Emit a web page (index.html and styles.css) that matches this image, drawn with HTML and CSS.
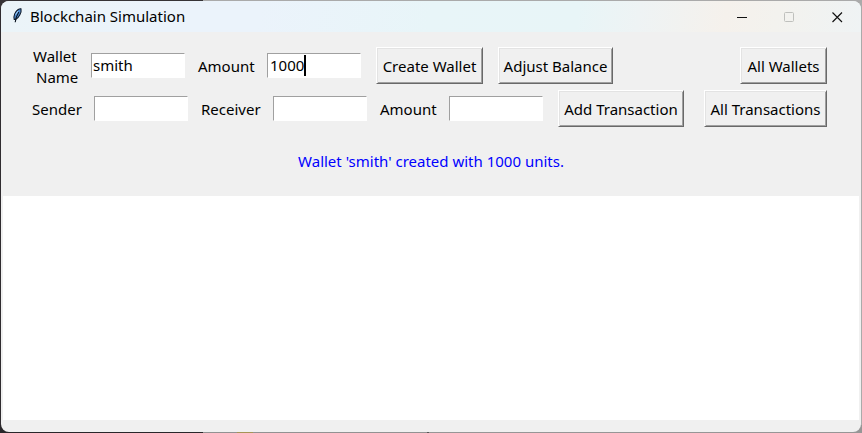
FILE: index.html
```html
<!DOCTYPE html>
<html lang="en">
<head>
<meta charset="utf-8">
<title>Blockchain Simulation</title>
<link rel="stylesheet" href="styles.css">
</head>
<body>
<main class="window">
  <header class="titlebar">
    <svg class="feather" width="12" height="18" viewBox="0 0 12 18">
      <path d="M3.2 12.4C2.2 9 4.2 4.4 7.2 2.5Q9 1.4 10 1.8C10.8 5 8 10.8 4.6 12.4Z" fill="#4c8ad0" stroke="#101b2b" stroke-width="1.1"/>
      <path d="M4.2 15.3Q4.4 10.5 7.8 5" fill="none" stroke="#07111d" stroke-width="1.1"/>
      <path d="M7 4L4.6 7.6" stroke="#a8d3fb" stroke-width="1"/>
    </svg>
    <h1 class="title">Blockchain Simulation</h1>
    <svg class="controls" width="108" height="12" viewBox="0 0 108 12">
      <path d="M0 6.5H10" stroke="#111" fill="none"/>
      <rect x="47.5" y="1.5" width="9" height="9" rx="1" stroke="#bfc0bd" fill="none"/>
      <path d="M95.5 1.5L105 11M105 1.5L95.5 11" stroke="#111" stroke-width="1.15" fill="none"/>
    </svg>
  </header>
  <section class="form">
    <div class="row wallet-row">
      <div class="label stacked"><span>Wallet</span><span class="name">Name</span></div>
      <div class="entry"><span>smith</span></div>
      <div class="label amount">Amount</div>
      <div class="entry"><span class="thousand">1000</span><i class="caret"></i></div>
      <button class="button create">Create Wallet</button>
      <button class="button adjust">Adjust Balance</button>
      <button class="button wallets">All Wallets</button>
    </div>
    <div class="row transaction-row">
      <div class="label">Sender</div>
      <div class="entry"></div>
      <div class="label receiver">Receiver</div>
      <div class="entry"></div>
      <div class="label amount">Amount</div>
      <div class="entry"></div>
      <button class="button add">Add Transaction</button>
      <button class="button transactions">All Transactions</button>
    </div>
    <p class="status">Wallet 'smith' created with 1000 units.</p>
  </section>
  <section class="output"></section>
</main>
</body>
</html>
```
FILE: styles.css
```css
* { box-sizing: border-box; }
html { height: 100%; }
body {
  margin: 0;
  height: 433px;
  padding: 1px;
  overflow: hidden;
  background:
    linear-gradient(90deg, #29272a 203px, #929292 203px 237px, #a59456 237px 253px, #929292 253px 427px, #555 427px 429px, #969696 429px) bottom / 100% 8px no-repeat,
    linear-gradient(90deg, #363336 203px, #aaa 203px) top / 100% 8px no-repeat,
    linear-gradient(90deg, #302c30 50%, #aaa 50%);
  font: 15px/21px "Noto Sans", "Open Sans", sans-serif;
  color: #000;
}
.window {
  height: 431px;
  overflow: hidden;
  border-radius: 8px;
  background: #f0f0f0;
}
.titlebar {
  display: flex;
  align-items: center;
  height: 31px;
  padding: 0 16px 0 10px;
  background: linear-gradient(100deg, #ebf4f8 0%, #ebf3fb 18%, #ebf3fb 30%, #e8f5f8 50%, #e8f5f7 67%, #eef3f4 74%, #f5f1ec 84%, #f3f2ee 90%, #eff3f4 100%);
}
.feather { flex: none; margin-top: -1px; }
.title { margin: 0 0 0 7px; font-size: 15px; font-weight: 400; white-space: nowrap; }
.controls { margin-left: auto; }
.form { height: 164px; padding: 15px 0 0 30px; }
.row { display: grid; grid-template-rows: 37px; height: 37px; align-items: center; white-space: nowrap; }
.wallet-row { grid-template-columns: 60px 107px 69px 109px 122px 242px 87px; }
.transaction-row { grid-template-columns: 63px 107px 72px 107px 69px 109px 146px 123px; margin-top: 6px; }
.label { padding: 2px 0 0 1px; }
.amount, .receiver { padding-left: 0; }
.stacked {
  display: flex;
  flex-direction: column;
  align-self: start;
  margin-top: -1px;
  padding: 0 0 0 2px;
}
.name { padding-left: 3px; }
.entry {
  display: flex;
  align-items: center;
  width: 94px;
  height: 25px;
  padding-left: 1px;
  border: 1px solid #fff;
  border-top-color: #a0a0a0;
  border-left-color: #a0a0a0;
  background: #fff;
}
.caret { width: 2px; height: 21px; background: #000; }
.thousand { padding-left: 1px; }
.button {
  height: 37px;
  padding: 1px 0 0;
  border: 1px solid;
  border-color: #fff #696969 #696969 #fff;
  background: #f0f0f0;
  box-shadow: inset 1px 1px #e3e3e3, inset -1px -1px #a0a0a0;
  font: inherit;
  color: #000;
  white-space: nowrap;
}
.create { width: 107px; }
.adjust { width: 115px; }
.wallets { width: 87px; }
.add { width: 126px; }
.transactions { width: 123px; }
.status { margin: 24px 30px 0 0; text-align: center; color: #00f; }
.output { height: 224px; margin: 0 2px; background: #fff; }
```
